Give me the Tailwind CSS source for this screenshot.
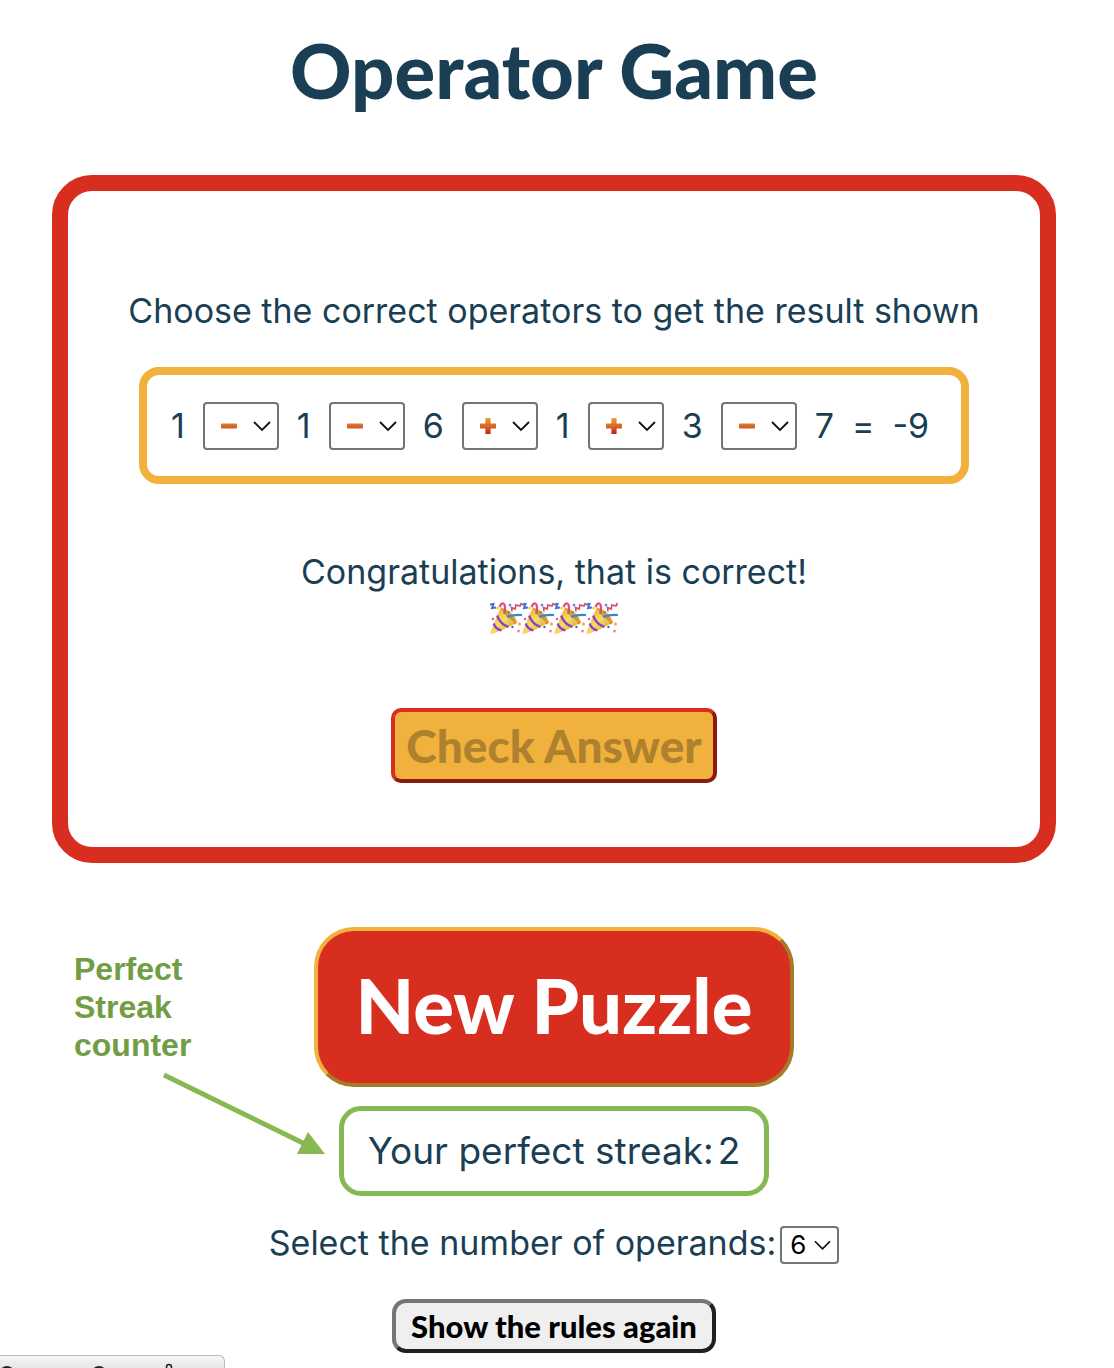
<!DOCTYPE html>
<html lang="en">
<head>
<meta charset="utf-8">
<meta name="viewport" content="width=device-width, initial-scale=1">
<title>Operator Game</title>
<script src="https://cdn.jsdelivr.net/npm/@tailwindcss/browser@4"></script>
</head>
<body class="relative min-h-screen overflow-x-hidden bg-white pr-[6px] font-[Inter,sans-serif] text-[#1a3f54]">
<svg class="absolute size-0" aria-hidden="true">
  <defs>
    <linearGradient id="op" gradientUnits="userSpaceOnUse" x1="0" y1="0" x2="0" y2="16"><stop offset="0" stop-color="#e8a33c"/><stop offset=".5" stop-color="#d96a28"/><stop offset="1" stop-color="#bd2318"/></linearGradient>
    <linearGradient id="cone" x1="0" y1="0" x2="1" y2="1"><stop offset="0" stop-color="#d9a42e"/><stop offset=".5" stop-color="#f7dc62"/><stop offset="1" stop-color="#c58a20"/></linearGradient>
    <symbol id="minus" viewBox="0 0 16 16"><rect y="5.500" width="16" height="5" rx="1" fill="url(#op)"/></symbol>
    <symbol id="plus" viewBox="0 0 16 16"><path d="M6 0h4q.6 0 .6.600V5.400H15.400q.6 0 .6.600v4q0 .600-.6.600H10.600v4.800q0 .600-.6.600H6q-.6 0-.6-.600V10.600H.6q-.6 0-.6-.600v-4q0-.600.6-.600H5.400V.6Q5.400 0 6 0Z" fill="url(#op)"/></symbol>
    <symbol id="chev" viewBox="0 0 18 11"><path d="M1 1l8 8 8-8" fill="none" stroke="#111" stroke-width="1.800"/></symbol>
    <symbol id="party" viewBox="0 0 32 34">
      <path d="M10.500 5.500Q6 17 .3 30.500q-.3 2 2 1.500Q15 27.500 27 20.500 24 9 10.500 5.500Z" fill="url(#cone)"/>
      <path d="M10.500 5.500Q21 8 27 20.500 18 19 10.500 5.500Z" fill="#d79a28"/>
      <path d="M7 13.500q3.500 9 11.500 11.500M3.500 21.500q2.500 6 8 7" fill="none" stroke="#8b3fc9" stroke-width="2.200"/>
      <path d="M17 15q6-2.500 15-2" fill="none" stroke="#3d82dc" stroke-width="2.200"/>
      <path d="M9.500 5q2-5 4.500-3 2 3 .2 10" fill="none" stroke="#e64b6c" stroke-width="2.200"/>
      <path d="M22 9.500l-.5-4 3.500 1.500 1-4 4 1 1.500-3" fill="none" stroke="#d9486f" stroke-width="1.700"/>
      <path d="M0 2.500l3.500-.500-1.500 4 4-.500" fill="none" stroke="#3f6fd2" stroke-width="1.900"/>
      <circle cx="20" cy="3" r="1.300" fill="#4b82dd"/><circle cx="7.500" cy="6" r="1.300" fill="#f0cb3d"/><circle cx="3" cy="17" r="1.200" fill="#e2557e"/><circle cx="22.500" cy="25" r="1.300" fill="#4b78d8"/><circle cx="28.500" cy="29" r="1.500" fill="#e88cad"/><circle cx="29.500" cy="22" r="1.500" fill="#eda64b"/><circle cx="25" cy="21" r="1.400" fill="#e78d39"/><circle cx="19" cy="10" r="1.100" fill="#4b82dd"/>
    </symbol>
  </defs>
</svg>

<main class="flex flex-col items-center">
  <h1 class="mt-5 font-[Lato,sans-serif] text-[76px] leading-[100px] font-black whitespace-nowrap">Operator Game</h1>

  <section class="mx-[52px] mt-[55px] flex flex-col items-center self-stretch rounded-[40px] border-16 border-[#d82e20] pt-24 pb-16">
    <p class="text-[34px] leading-12 whitespace-nowrap">Choose the correct operators to get the result shown</p>
    <div class="mt-8 flex h-[117px] w-[830px] items-center gap-[18px] rounded-[20px] border-8 border-[#f1b13d] px-6 text-[34px]">
      <span>1</span>
      <span class="relative"><select aria-label="Operator 1" class="block h-12 w-[76px] appearance-none rounded border-2 border-[#757575] bg-white text-transparent"><option>−</option><option>+</option></select><svg class="pointer-events-none absolute top-4 left-[18px] size-4"><use href="#minus"/></svg><svg class="pointer-events-none absolute top-[19px] right-2 h-[11px] w-[18px]"><use href="#chev"/></svg></span>
      <span>1</span>
      <span class="relative"><select aria-label="Operator 2" class="block h-12 w-[76px] appearance-none rounded border-2 border-[#757575] bg-white text-transparent"><option>−</option><option>+</option></select><svg class="pointer-events-none absolute top-4 left-[18px] size-4"><use href="#minus"/></svg><svg class="pointer-events-none absolute top-[19px] right-2 h-[11px] w-[18px]"><use href="#chev"/></svg></span>
      <span>6</span>
      <span class="relative"><select aria-label="Operator 3" class="block h-12 w-[76px] appearance-none rounded border-2 border-[#757575] bg-white text-transparent"><option>+</option><option>−</option></select><svg class="pointer-events-none absolute top-4 left-[18px] size-4"><use href="#plus"/></svg><svg class="pointer-events-none absolute top-[19px] right-2 h-[11px] w-[18px]"><use href="#chev"/></svg></span>
      <span>1</span>
      <span class="relative"><select aria-label="Operator 4" class="block h-12 w-[76px] appearance-none rounded border-2 border-[#757575] bg-white text-transparent"><option>+</option><option>−</option></select><svg class="pointer-events-none absolute top-4 left-[18px] size-4"><use href="#plus"/></svg><svg class="pointer-events-none absolute top-[19px] right-2 h-[11px] w-[18px]"><use href="#chev"/></svg></span>
      <span>3</span>
      <span class="relative"><select aria-label="Operator 5" class="block h-12 w-[76px] appearance-none rounded border-2 border-[#757575] bg-white text-transparent"><option>−</option><option>+</option></select><svg class="pointer-events-none absolute top-4 left-[18px] size-4"><use href="#minus"/></svg><svg class="pointer-events-none absolute top-[19px] right-2 h-[11px] w-[18px]"><use href="#chev"/></svg></span>
      <span>7</span>
      <span>=</span>
      <span>-9</span>
    </div>
    <p class="mt-16 text-[34px] leading-12 whitespace-nowrap">Congratulations, that is correct!</p>
    <div class="mt-1.5 flex" role="img" aria-label="Party poppers">
      <svg class="h-[34px] w-8"><use href="#party"/></svg><svg class="h-[34px] w-8"><use href="#party"/></svg><svg class="h-[34px] w-8"><use href="#party"/></svg><svg class="h-[34px] w-8"><use href="#party"/></svg>
    </div>
    <button disabled class="mt-[72px] flex h-[75px] w-[326px] items-center justify-center rounded-[10px] border-4 border-t-[#d82e20] border-r-[#8b1b10] border-b-[#8b1b10] border-l-[#d82e20] bg-[#f1b13d] font-[Lato,sans-serif] text-[46px] font-black whitespace-nowrap text-[#ae812f]">Check Answer</button>
  </section>

  <section class="relative mt-16 flex flex-col items-center self-stretch">
    <button class="flex h-40 w-[480px] items-center justify-center rounded-[40px] border-4 border-t-[#f1b13d] border-r-[#a67a28] border-b-[#a67a28] border-l-[#f1b13d] bg-[#d82e20] pb-1 font-[Lato,sans-serif] text-[76px] font-black whitespace-nowrap text-white">New Puzzle</button>
    <p class="mt-[19px] flex h-[90px] w-[430px] items-center justify-center rounded-[22px] border-[5px] border-[#87b953] text-[37px] whitespace-nowrap">Your perfect streak:<span class="ml-1">2</span></p>
    <p class="absolute top-[23px] left-[74px] font-['Liberation_Sans',sans-serif] text-[32px] leading-[38px] font-bold text-[#719d45]">Perfect<br>Streak<br>counter</p>
    <svg class="absolute top-[143px] left-[160px] h-[90px] w-[170px]" viewBox="0 0 170 90" fill="#87b953" aria-hidden="true"><path d="M4 5L145 74" stroke="#87b953" stroke-width="5"/><path d="M148 62L165 84H137Z"/></svg>
  </section>

  <div class="mt-[30px] flex h-[38px] items-center gap-1 text-[34px] leading-[34px] whitespace-nowrap">
    <label for="operands" class="pb-1">Select the number of operands:</label>
    <span class="relative"><select id="operands" class="block h-[38px] w-[59px] appearance-none rounded border-2 border-[#757575] bg-white pl-2 text-[26px] leading-[34px] text-black"><option>6</option><option>5</option><option>4</option></select><svg class="pointer-events-none absolute top-[14px] right-2 h-[11px] w-[17px]"><use href="#chev"/></svg></span>
  </div>

  <button class="mt-[35px] flex h-[54px] w-[324px] items-center justify-center rounded-[14px] border-4 border-t-[#757575] border-r-[#202020] border-b-[#202020] border-l-[#757575] bg-[#efefef] font-[Lato,sans-serif] text-[31px] font-black whitespace-nowrap text-black">Show the rules again</button>
</main>

<div class="absolute bottom-0 left-0 h-[13px] w-[225px] overflow-hidden rounded-tr-md border-t border-r border-[#bbb] bg-linear-to-b from-[#f7f7f7] to-[#e6e6e6]" aria-hidden="true">
  <svg class="h-3 w-[224px]" viewBox="0 0 224 12" fill="none" stroke="#222" stroke-width="2"><path d="M2 13q5-4 10 0M94 13q5-4 10 0"/><circle cx="169" cy="11" r="2.500" stroke-width="1.500"/></svg>
</div>
</body>
</html>
